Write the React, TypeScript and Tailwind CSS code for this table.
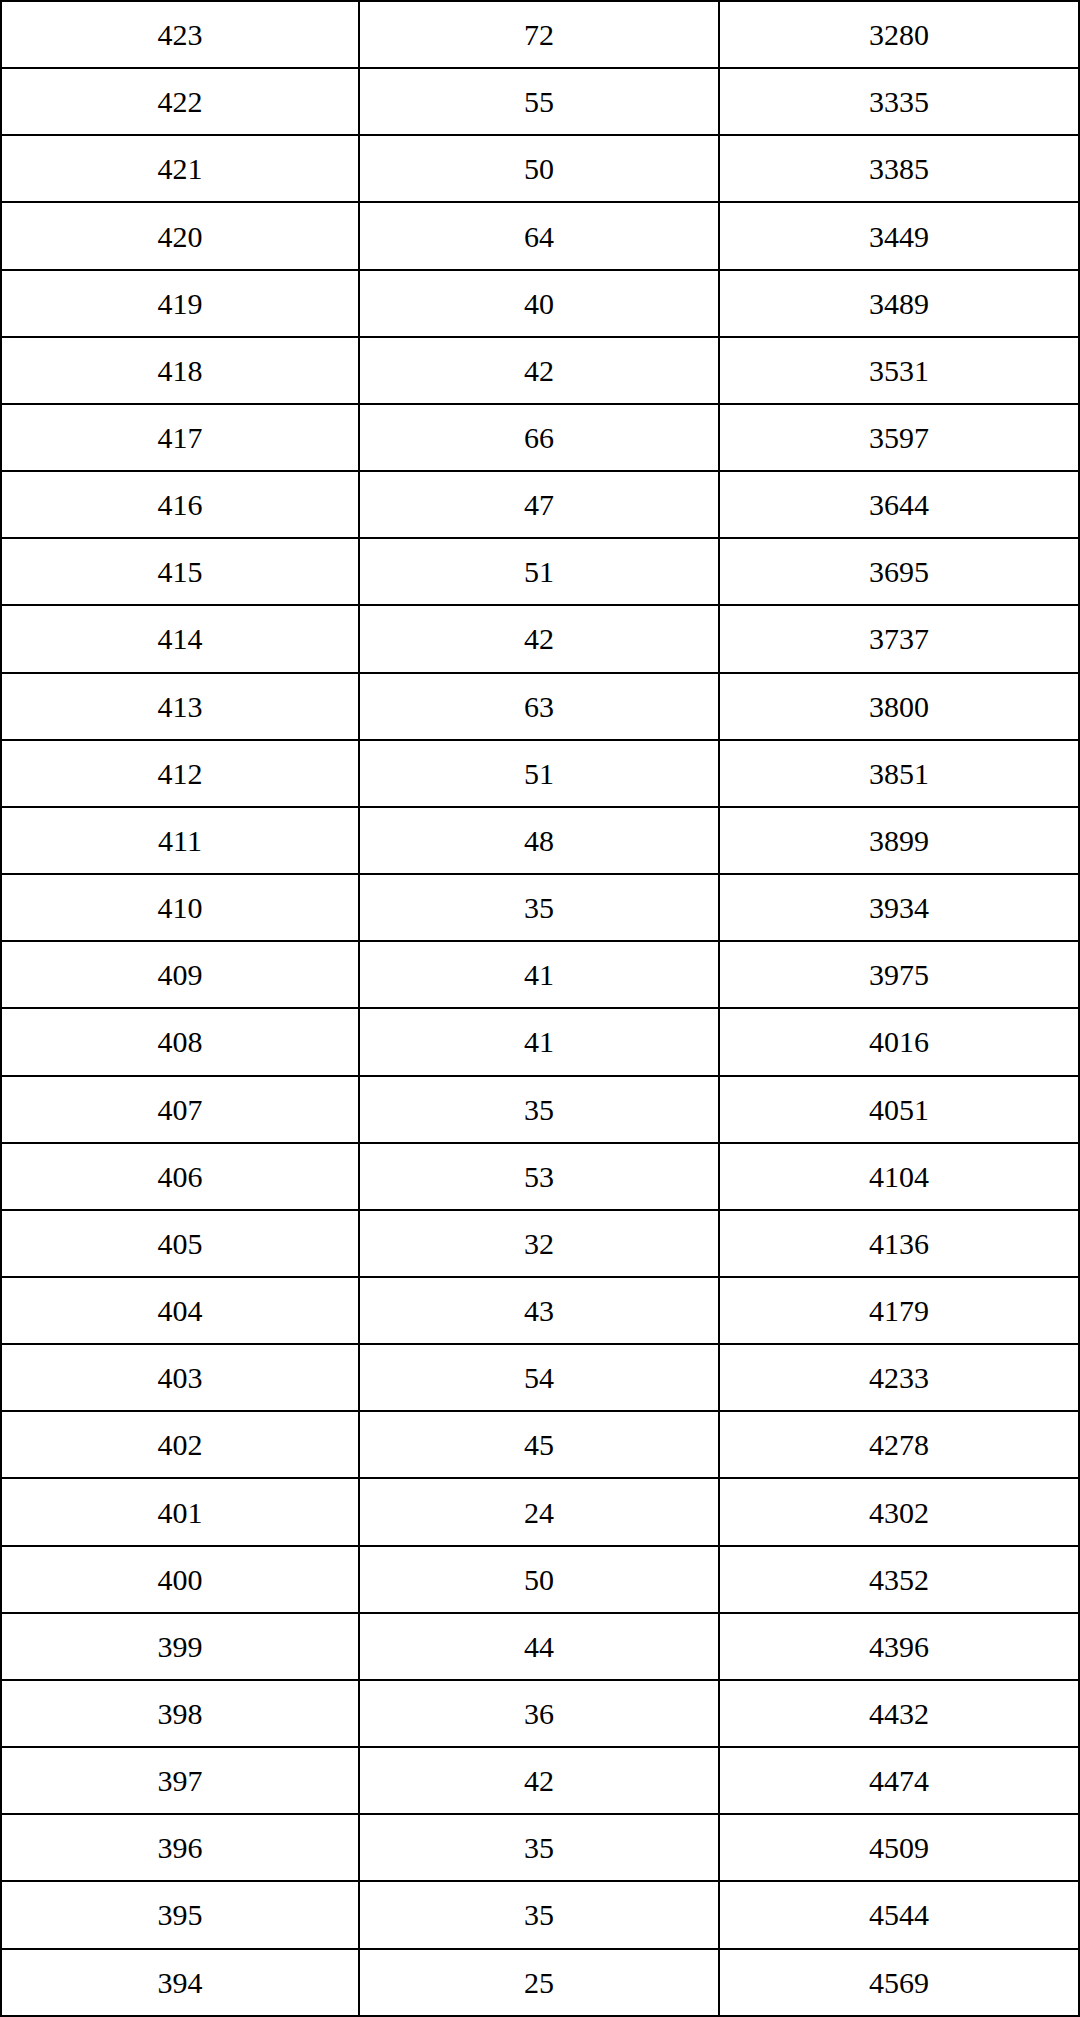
const rows: [number, number, number][] = [
  [423, 72, 3280],
  [422, 55, 3335],
  [421, 50, 3385],
  [420, 64, 3449],
  [419, 40, 3489],
  [418, 42, 3531],
  [417, 66, 3597],
  [416, 47, 3644],
  [415, 51, 3695],
  [414, 42, 3737],
  [413, 63, 3800],
  [412, 51, 3851],
  [411, 48, 3899],
  [410, 35, 3934],
  [409, 41, 3975],
  [408, 41, 4016],
  [407, 35, 4051],
  [406, 53, 4104],
  [405, 32, 4136],
  [404, 43, 4179],
  [403, 54, 4233],
  [402, 45, 4278],
  [401, 24, 4302],
  [400, 50, 4352],
  [399, 44, 4396],
  [398, 36, 4432],
  [397, 42, 4474],
  [396, 35, 4509],
  [395, 35, 4544],
  [394, 25, 4569],
];

export default function App() {
  return (
    <div className="w-[1080px] bg-white border-t-2 border-x-2 border-black font-['Liberation_Serif',serif] text-[30px] text-black">
      {rows.map(([score, count, total]) => (
        <div
          key={score}
          className="grid grid-cols-[358px_360px_1fr] h-[67.17px] border-b-2 border-black"
        >
          <div className="flex items-center justify-center border-r-2 border-black">{score}</div>
          <div className="flex items-center justify-center border-r-2 border-black">{count}</div>
          <div className="flex items-center justify-center">{total}</div>
        </div>
      ))}
    </div>
  );
}
